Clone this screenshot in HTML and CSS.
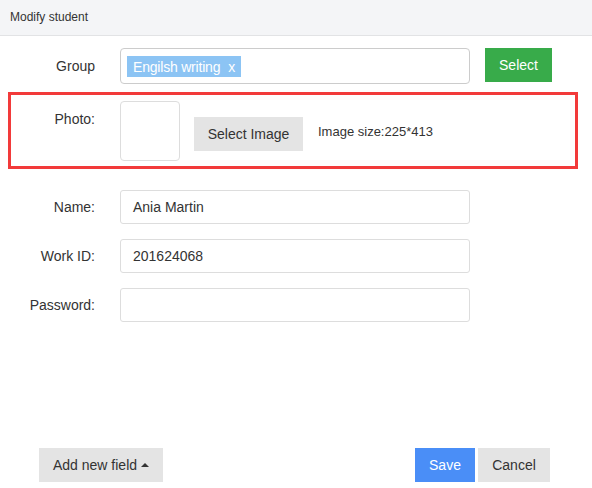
FILE: index.html
```html
<!DOCTYPE html>
<html>
<head>
<meta charset="utf-8">
<link rel="stylesheet" href="styles.css">
</head>
<body>
<div class="page">
  <div class="header">Modify student</div>
  <div class="form">
    <div class="row group-row">
      <div class="label">Group</div>
      <div class="tag-input"><span class="tag">Engilsh writing<span class="tag-x">x</span></span></div>
      <button class="btn btn-green">Select</button>
    </div>
    <div class="photo-box">
      <div class="label photo-label">Photo:</div>
      <div class="thumb"></div>
      <button class="btn btn-grey btn-select-image">Select Image</button>
      <div class="size-note">Image size:225*413</div>
    </div>
    <div class="fields">
      <div class="row">
        <div class="label">Name:</div>
        <div class="field">Ania Martin</div>
      </div>
      <div class="row">
        <div class="label">Work ID:</div>
        <div class="field">201624068</div>
      </div>
      <div class="row">
        <div class="label">Password:</div>
        <div class="field"></div>
      </div>
    </div>
  </div>
  <div class="footer">
    <button class="btn btn-grey btn-add">Add new field<span class="caret"></span></button>
    <div class="footer-right">
      <button class="btn btn-blue btn-save">Save</button>
      <button class="btn btn-grey btn-cancel">Cancel</button>
    </div>
  </div>
</div>
</body>
</html>
```
FILE: styles.css
```css
* { box-sizing: border-box; }
html, body { margin: 0; padding: 0; background: #fff; }
body {
  font-family: "Liberation Sans", Arial, sans-serif;
  font-size: 14px;
  color: #333;
}
.page {
  width: 592px;
  height: 488px;
  display: flex;
  flex-direction: column;
}
.header {
  height: 36px;
  line-height: 35px;
  background: #f4f5f7;
  border-bottom: 1px solid #e2e3e5;
  padding-left: 10px;
  font-size: 12px;
  color: #333;
}
.form { padding-top: 12px; }
.row {
  display: flex;
  align-items: flex-start;
}
.label {
  width: 95px;
  margin-right: 25px;
  text-align: right;
  line-height: 34px;
  flex: none;
}
.group-row .label { line-height: 36px; }
.tag-input {
  width: 350px;
  height: 36px;
  border: 1px solid #ccc;
  border-radius: 4px;
  padding: 7px 6px;
  display: flex;
  align-items: flex-start;
}
.tag {
  display: inline-flex;
  align-items: center;
  white-space: nowrap;
  overflow: hidden;
  width: 114px;
  height: 21px;
  padding: 0 0 0 6px;
  background: #8cc4f4;
  color: #fff;
  font-size: 14px;
  letter-spacing: -0.2px;
}
.tag-x { margin-left: 8px; }
.btn {
  font-family: "Liberation Sans", Arial, sans-serif;
  font-size: 14px;
  border: none;
  height: 34px;
  padding: 0;
  cursor: pointer;
}
.btn-green {
  margin-left: 15px;
  width: 67px;
  background: #38ab4a;
  color: #fff;
}
.btn-grey { background: #e4e4e4; color: #333; }
.btn-blue { background: #4a8ef7; color: #fff; }
.photo-box {
  margin: 8px 14px 0 8px;
  border: 3px solid #f23a3a;
  height: 77px;
  padding: 6px 0 5px 0;
  display: flex;
  align-items: flex-start;
}
.photo-label {
  width: 84px;
  line-height: 36px;
}
.thumb {
  width: 60px;
  height: 60px;
  border: 1px solid #ddd;
  border-radius: 4px;
  flex: none;
}
.btn-select-image {
  margin-left: 14px;
  margin-top: 16px;
  width: 109px;
}
.size-note {
  margin-left: 15px;
  margin-top: 21px;
  line-height: 20px;
  font-size: 13px;
}
.fields {
  margin-top: 21px;
  display: flex;
  flex-direction: column;
  gap: 15px;
}
.field {
  width: 350px;
  height: 34px;
  border: 1px solid #ddd;
  border-radius: 3px;
  padding-left: 12px;
  line-height: 32px;
}
.footer {
  margin-top: auto;
  padding: 0 42px 6px 39px;
  display: flex;
  justify-content: space-between;
}
.btn-add {
  width: 124px;
  display: flex;
  align-items: center;
  justify-content: center;
}
.caret {
  display: inline-block;
  width: 0;
  height: 0;
  margin-left: 4px;
  border-left: 4px solid transparent;
  border-right: 4px solid transparent;
  border-bottom: 4px solid #333;
}
.footer-right { display: flex; gap: 3px; }
.btn-save { width: 60px; }
.btn-cancel { width: 72px; }
```
